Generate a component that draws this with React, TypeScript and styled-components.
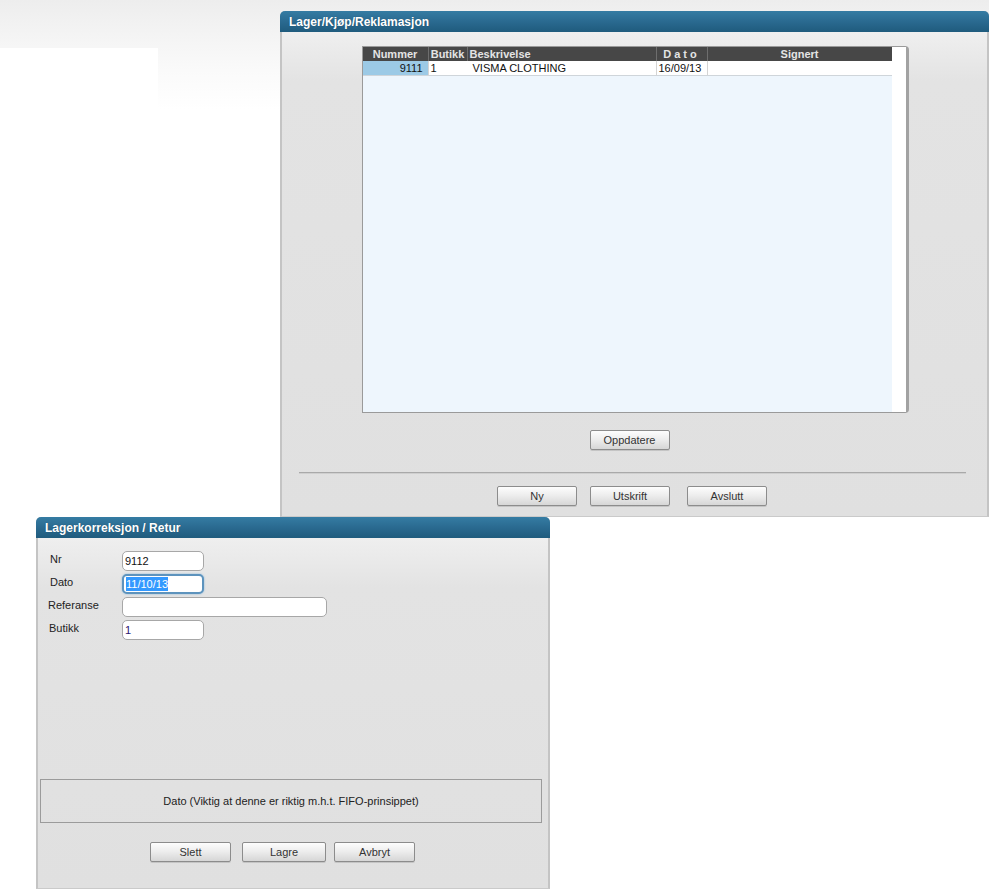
import React, { FC } from "react";
import styled, { createGlobalStyle } from "styled-components";

const GlobalStyle = createGlobalStyle`
  html, body {
    margin: 0;
    padding: 0;
    background: #ffffff;
  }
  * {
    box-sizing: border-box;
  }
`;

interface Column {
  title: string;
  width: number;
  align: "left" | "center" | "right";
  spaced?: boolean;
}

const columns: Column[] = [
  { title: "Nummer", width: 65, align: "center" },
  { title: "Butikk", width: 39, align: "center" },
  { title: "Beskrivelse", width: 189, align: "left" },
  { title: "Dato", width: 51, align: "center", spaced: true },
  { title: "Signert", width: 185, align: "center" },
];

const rows = [
  { nummer: "9111", butikk: "1", beskrivelse: "VISMA CLOTHING", dato: "16/09/13", signert: "" },
];

const App: FC = () => {
  return (
    <>
      <GlobalStyle />
      <Desktop>
        <SidePanel />

        <Window left={280} top={11} width={709} height={506}>
          <TitleBar>Lager/Kjøp/Reklamasjon</TitleBar>
          <ListBody>
            <GridBox>
              <GridArea>
                <HeaderRow>
                  {columns.map((c) => (
                    <HeaderCell key={c.title} w={c.width} align={c.align} spaced={c.spaced}>
                      {c.title}
                    </HeaderCell>
                  ))}
                </HeaderRow>
                {rows.map((r) => (
                  <DataRow key={r.nummer}>
                    <DataCell w={65} align="right" highlight>
                      {r.nummer}
                    </DataCell>
                    <DataCell w={39} align="left">
                      {r.butikk}
                    </DataCell>
                    <DataCell w={189} align="left" indent={3} plain>
                      {r.beskrivelse}
                    </DataCell>
                    <DataCell w={51} align="left">
                      {r.dato}
                    </DataCell>
                    <DataCell w={185} align="left">
                      {r.signert}
                    </DataCell>
                  </DataRow>
                ))}
              </GridArea>
              <ScrollStrip />
            </GridBox>
            <RefreshButton wide={80}>Oppdatere</RefreshButton>
            <Separator />
            <ButtonRow>
              <Button wide={80}>Ny</Button>
              <Button wide={80}>Utskrift</Button>
              <Button wide={80} push={4}>
                Avslutt
              </Button>
            </ButtonRow>
          </ListBody>
        </Window>

        <Window left={36} top={517} width={514} height={372}>
          <TitleBar>Lagerkorreksjon / Retur</TitleBar>
          <FormBody>
            <Form>
              <Label>Nr</Label>
              <Field w={82}>9112</Field>
              <Label>Dato</Label>
              <Field w={82} focused>
                <Selected>11/10/13</Selected>
              </Field>
              <Label shift={-2}>Referanse</Label>
              <Field w={205}></Field>
              <Label shift={-1}>Butikk</Label>
              <Field w={82} tone="#2b1470">
                1
              </Field>
            </Form>
            <Spacer />
            <HintBox>Dato (Viktig at denne er riktig m.h.t. FIFO-prinsippet)</HintBox>
            <FormButtons>
              <Button wide={81}>Slett</Button>
              <Button wide={84}>Lagre</Button>
              <Button wide={81} push={-3}>
                Avbryt
              </Button>
            </FormButtons>
          </FormBody>
        </Window>
      </Desktop>
    </>
  );
};

const Desktop = styled.div`
  position: relative;
  width: 989px;
  height: 892px;
  overflow: hidden;
  font-family: "Liberation Sans", Arial, sans-serif;
  background: linear-gradient(180deg, #ededed 0px, #f4f4f4 35px, #fafafa 70px, #ffffff 110px);
`;

const SidePanel = styled.div`
  position: absolute;
  left: 0;
  top: 48px;
  width: 158px;
  height: 469px;
  background: #ffffff;
`;

const Window = styled.div<{ left: number; top: number; width: number; height: number }>`
  position: absolute;
  left: ${(p) => p.left}px;
  top: ${(p) => p.top}px;
  width: ${(p) => p.width}px;
  height: ${(p) => p.height}px;
  display: flex;
  flex-direction: column;
  border-left: 2px solid #c4c4c4;
  border-right: 2px solid #c4c4c4;
  border-bottom: 1px solid #cacaca;
  border-radius: 5px 5px 0 0;
  background: linear-gradient(180deg, #f4f4f4 0px, #e3e3e3 70px, #e0e0e0 100%);
`;

const TitleBar = styled.div`
  height: 21px;
  flex: none;
  margin: 0 -2px;
  padding: 0 0 0 9px;
  display: flex;
  align-items: center;
  border-radius: 5px 5px 0 0;
  background: linear-gradient(180deg, #357ca3 0%, #2a6a90 50%, #1f5b7d 100%);
  color: #ffffff;
  font-size: 12px;
  font-weight: bold;
  text-shadow: 0 0 1px rgba(0, 0, 0, 0.3);
`;

const ListBody = styled.div`
  display: flex;
  flex-direction: column;
  align-items: center;
  padding-top: 14px;
`;

const GridBox = styled.div`
  width: 547px;
  height: 367px;
  margin-left: 1px;
  display: flex;
  background: #ffffff;
  border: 1px solid #9a9a9a;
  border-right: 3px solid #a2a2a2;
  border-radius: 0 4px 4px 0;
`;

const GridArea = styled.div`
  width: 529px;
  height: 100%;
  background: #eef6fd;
`;

const ScrollStrip = styled.div`
  flex: 1;
  background: #ffffff;
`;

const HeaderRow = styled.div`
  display: flex;
  height: 14px;
  background: #474747;
`;

const HeaderCell = styled.div<{ w: number; align: string; spaced?: boolean }>`
  width: ${(p) => p.w}px;
  flex: none;
  padding: 0 2px;
  border-left: 1px solid #6e6e6e;
  color: #e4e4e4;
  font-size: 11px;
  font-weight: bold;
  line-height: 14px;
  text-align: ${(p) => p.align};
  letter-spacing: ${(p) => (p.spaced ? "3px" : "0")};
  white-space: nowrap;
  overflow: hidden;

  &:first-child {
    border-left: none;
  }
`;

const DataRow = styled.div`
  display: flex;
  height: 15px;
  background: #ffffff;
  border-bottom: 1px solid #cfd5da;
`;

const DataCell = styled.div<{
  w: number;
  align: string;
  highlight?: boolean;
  indent?: number;
  plain?: boolean;
}>`
  width: ${(p) => p.w}px;
  flex: none;
  padding: 1px ${(p) => (p.align === "right" ? 5 : 2)}px 0 ${(p) => 2 + (p.indent || 0)}px;
  border-left: 1px solid ${(p) => (p.plain ? "#ffffff" : "#d4d4d4")};
  background: ${(p) => (p.highlight ? "#9ccae6" : "#ffffff")};
  color: #111111;
  font-size: 11px;
  line-height: 13px;
  text-align: ${(p) => p.align};
  white-space: nowrap;
  overflow: hidden;

  &:first-child {
    border-left: none;
  }
`;

const Button = styled.button<{ wide: number; push?: number }>`
  width: ${(p) => p.wide}px;
  height: 20px;
  padding: 0;
  margin-left: ${(p) => p.push || 0}px;
  border: 1px solid #8c8c8c;
  border-radius: 2px;
  background: linear-gradient(180deg, #fdfdfd 0%, #ececec 50%, #d6d6d6 100%);
  box-shadow: 0 1px 0 rgba(0, 0, 0, 0.12);
  color: #333333;
  font-family: "Liberation Sans", Arial, sans-serif;
  font-size: 11px;
  cursor: pointer;
`;

const RefreshButton = styled(Button)`
  margin-top: 17px;
  margin-right: 10px;
`;

const Separator = styled.div`
  align-self: stretch;
  height: 2px;
  margin: 22px 21px 0 17px;
  background: #a9a9a9;
  border-bottom: 1px solid #cfcfcf;
`;

const ButtonRow = styled.div`
  display: flex;
  gap: 13px;
  margin-top: 12px;
  margin-right: 5px;
`;

const FormBody = styled.div`
  flex: 1;
  display: flex;
  flex-direction: column;
  padding: 13px 6px 26px 2px;
`;

const Form = styled.div`
  display: grid;
  grid-template-columns: 72px auto;
  row-gap: 3px;
  justify-content: start;
  padding-left: 10px;
`;

const Label = styled.div<{ shift?: number }>`
  color: #222222;
  font-size: 11px;
  line-height: 14px;
  padding-top: 1px;
  margin-left: ${(p) => p.shift || 0}px;
`;

const Field = styled.div<{ w: number; focused?: boolean; tone?: string }>`
  width: ${(p) => p.w}px;
  height: 20px;
  display: flex;
  align-items: center;
  padding: 0 2px;
  background: #ffffff;
  border: ${(p) => (p.focused ? "2px solid #5d93bd" : "1px solid #a7a7a7")};
  border-radius: 5px;
  box-shadow: ${(p) => (p.focused ? "0 0 2px #7fb2da" : "none")};
  color: ${(p) => p.tone || "#111111"};
  font-size: 11px;
`;

const Selected = styled.span`
  background: #3399ff;
  color: #ffffff;
  line-height: 14px;
`;

const Spacer = styled.div`
  flex: 1;
`;

const HintBox = styled.div`
  height: 44px;
  display: flex;
  align-items: center;
  justify-content: center;
  border: 1px solid #9b9b9b;
  color: #222222;
  font-size: 11px;
`;

const FormButtons = styled.div`
  display: flex;
  gap: 11px;
  margin-top: 19px;
  padding-left: 110px;
`;

export default App;
